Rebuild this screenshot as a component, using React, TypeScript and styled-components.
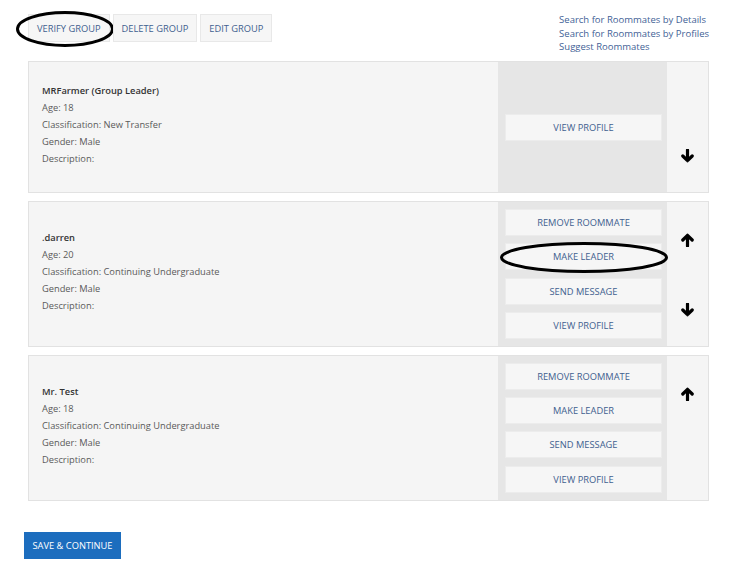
import React from "react";
import styled, { createGlobalStyle } from "styled-components";

const GlobalStyle = createGlobalStyle`
  body {
    margin: 0;
    background: #ffffff;
    font-family: "Open Sans", "Liberation Sans", Arial, sans-serif;
  }
`;

const Page = styled.div`
  width: 739px;
  height: 574px;
  box-sizing: border-box;
  padding: 14px 30px 0 28px;
`;

const TopBar = styled.div`
  display: flex;
  justify-content: space-between;
  align-items: flex-start;
  height: 47px;
`;

const GroupActions = styled.div`
  display: flex;
  gap: 3px;
`;

const GroupButton = styled.button`
  position: relative;
  height: 28px;
  padding: 0 8px;
  background: #f6f6f6;
  border: 1px solid #e8e8e8;
  color: #3f5f8f;
  font-family: inherit;
  font-size: 9.3px;
  text-transform: uppercase;
  cursor: pointer;
`;

const Circle = styled.svg<{ $w: number; $h: number; $x: number; $y: number }>`
  position: absolute;
  left: ${(p) => p.$x}px;
  top: ${(p) => p.$y}px;
  width: ${(p) => p.$w}px;
  height: ${(p) => p.$h}px;
  pointer-events: none;
  overflow: visible;
`;

const Links = styled.div`
  display: flex;
  flex-direction: column;
  margin-top: -1px;
`;

const LinkItem = styled.span`
  color: #3f5f96;
  font-size: 9.5px;
  line-height: 13.5px;
  cursor: pointer;
`;

const Cards = styled.div`
  display: flex;
  flex-direction: column;
  gap: 8px;
`;

const Card = styled.div`
  display: grid;
  grid-template-columns: 1fr 169px 41px;
  background: #f5f5f5;
  border: 1px solid #e2e2e2;
`;

const Info = styled.div`
  display: flex;
  flex-direction: column;
  justify-content: center;
  padding: 20px 13px 25px;
  font-size: 9.3px;
  line-height: 17px;
  color: #5a5a5a;
`;

const Name = styled.div`
  color: #333;
  font-weight: 600;
`;

const ActionsCol = styled.div`
  display: flex;
  flex-direction: column;
  justify-content: center;
  gap: 7.3px;
  padding: 7px 5px 7px 7px;
  background: #e6e6e6;
`;

const ActionButton = styled.button`
  position: relative;
  height: 27px;
  background: #f6f6f6;
  border: 1px solid #ececec;
  color: #3f5f8f;
  font-family: inherit;
  font-size: 9.3px;
  text-transform: uppercase;
  cursor: pointer;
`;

const ArrowCol = styled.div`
  display: flex;
  flex-direction: column;
  align-items: center;
  padding: 31px 0 29px;
`;

const ArrowIcon = styled.svg<{ $push?: boolean }>`
  width: 13px;
  height: 14px;
  margin-top: ${(p) => (p.$push ? "auto" : "0")};
`;

const SaveButton = styled.button`
  margin-top: 31px;
  margin-left: -4px;
  height: 27px;
  padding: 0 8.5px;
  background: #1c6dbe;
  border: none;
  color: #fff;
  font-family: inherit;
  font-size: 9.3px;
  text-transform: uppercase;
  cursor: pointer;
`;

function Ring({ w, h, x, y }: { w: number; h: number; x: number; y: number }) {
  return (
    <Circle $w={w} $h={h} $x={x} $y={y} viewBox={`0 0 ${w} ${h}`}>
      <ellipse
        cx={w / 2}
        cy={h / 2}
        rx={w / 2 - 1.5}
        ry={h / 2 - 1.5}
        fill="none"
        stroke="#000"
        strokeWidth={3}
      />
    </Circle>
  );
}

function Arrow({ dir, push }: { dir: "up" | "down"; push?: boolean }) {
  return (
    <ArrowIcon $push={push} viewBox="0 0 13 14">
      <g transform={dir === "down" ? "rotate(180 6.5 7)" : undefined}>
        <path
          d="M6.5 13V2.5M1.8 7L6.5 2.3L11.2 7"
          fill="none"
          stroke="#000"
          strokeWidth={3.2}
          strokeLinecap="round"
          strokeLinejoin="round"
        />
      </g>
    </ArrowIcon>
  );
}

interface Member {
  name: string;
  age: number;
  classification: string;
  leader?: boolean;
  up?: boolean;
  down?: boolean;
  ringLeader?: boolean;
}

const members: Member[] = [
  { name: "MRFarmer (Group Leader)", age: 18, classification: "New Transfer", leader: true, down: true },
  { name: ".darren", age: 20, classification: "Continuing Undergraduate", up: true, down: true, ringLeader: true },
  { name: "Mr. Test", age: 18, classification: "Continuing Undergraduate", up: true },
];

function MemberCard({ m }: { m: Member }) {
  return (
    <Card>
      <Info>
        <Name>{m.name}</Name>
        <div>Age: {m.age}</div>
        <div>Classification: {m.classification}</div>
        <div>Gender: Male</div>
        <div>Description:</div>
      </Info>
      <ActionsCol>
        {!m.leader && <ActionButton>Remove Roommate</ActionButton>}
        {!m.leader && (
          <ActionButton>
            Make Leader
            {m.ringLeader && <Ring w={168} h={31} x={-6} y={-2} />}
          </ActionButton>
        )}
        {!m.leader && <ActionButton>Send Message</ActionButton>}
        <ActionButton>View Profile</ActionButton>
      </ActionsCol>
      <ArrowCol>
        {m.up && <Arrow dir="up" />}
        {m.down && <Arrow dir="down" push />}
      </ArrowCol>
    </Card>
  );
}

export default function App() {
  return (
    <Page>
      <GlobalStyle />
      <TopBar>
        <GroupActions>
          <GroupButton>
            Verify Group
            <Ring w={98} h={36} x={-13} y={-4} />
          </GroupButton>
          <GroupButton>Delete Group</GroupButton>
          <GroupButton>Edit Group</GroupButton>
        </GroupActions>
        <Links>
          <LinkItem>Search for Roommates by Details</LinkItem>
          <LinkItem>Search for Roommates by Profiles</LinkItem>
          <LinkItem>Suggest Roommates</LinkItem>
        </Links>
      </TopBar>
      <Cards>
        {members.map((m) => (
          <MemberCard key={m.name} m={m} />
        ))}
      </Cards>
      <SaveButton>Save &amp; Continue</SaveButton>
    </Page>
  );
}
